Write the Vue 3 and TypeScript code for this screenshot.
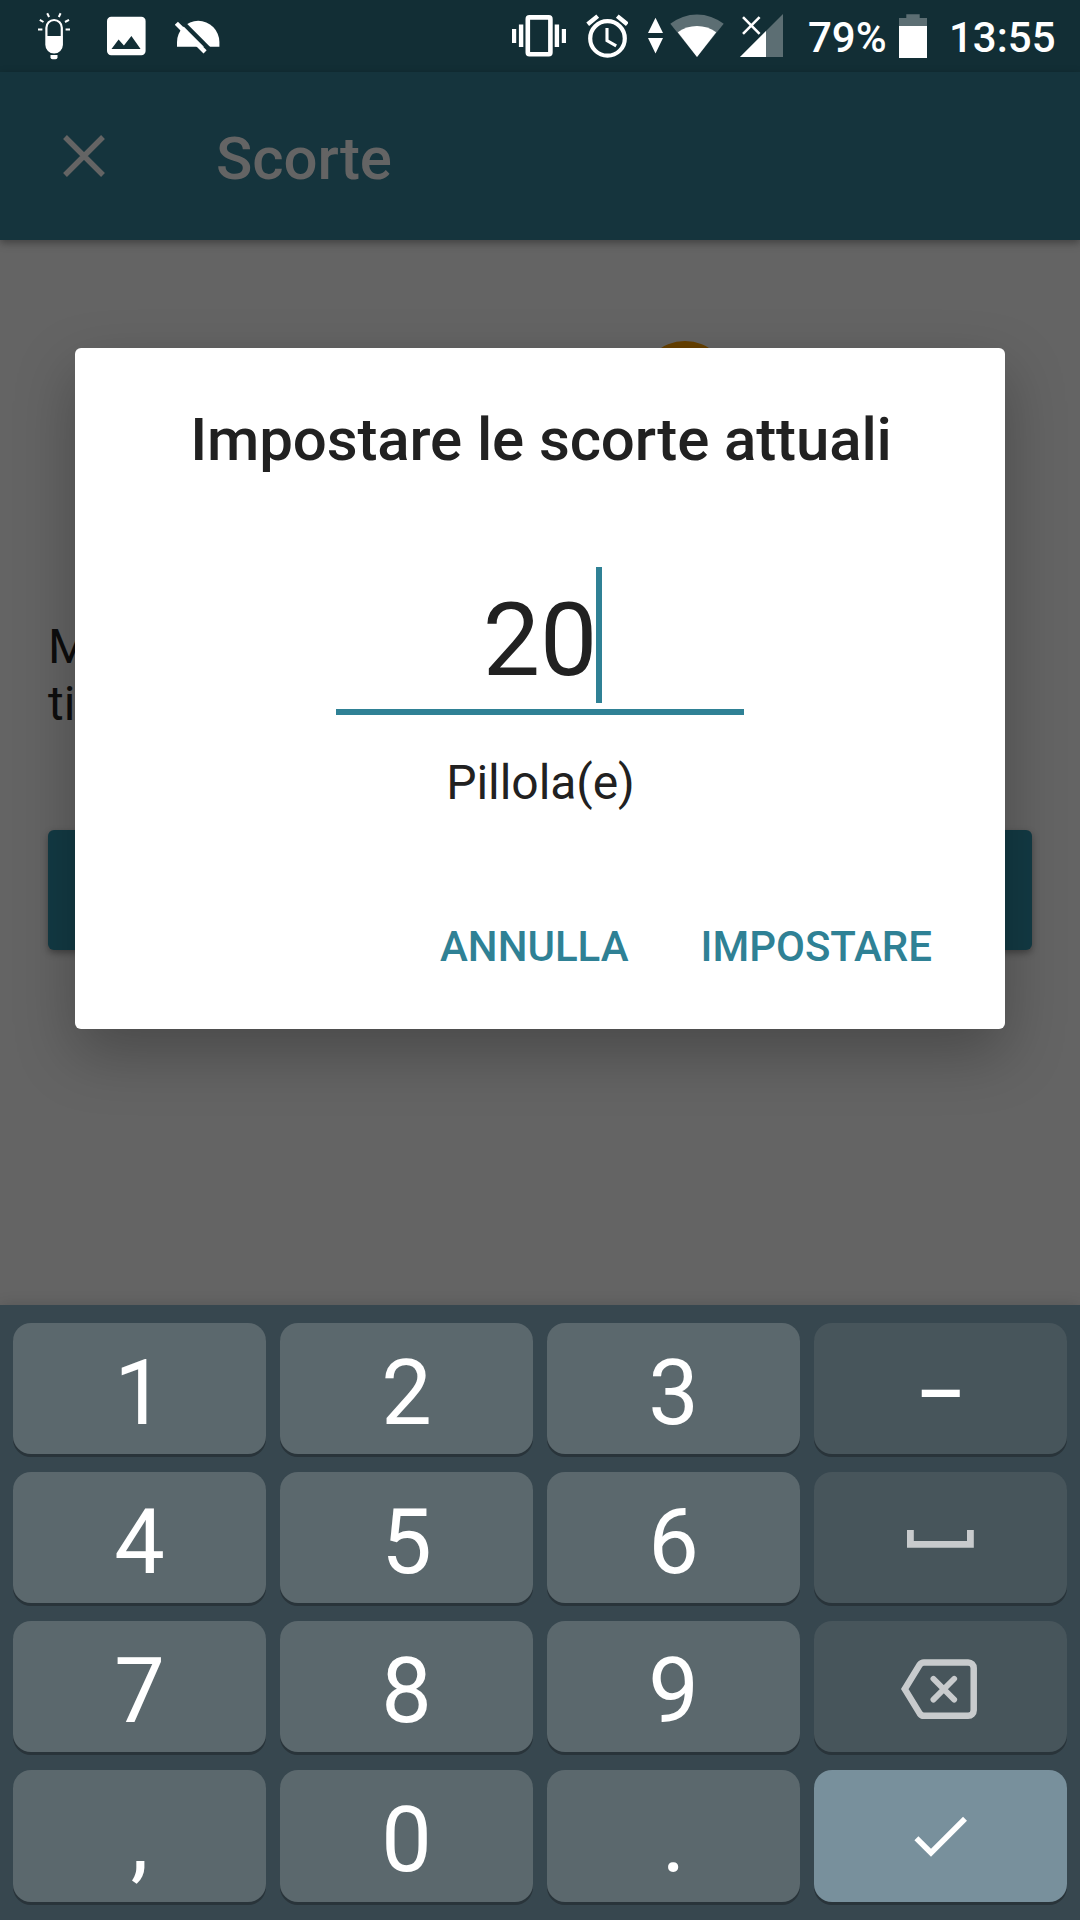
<script setup lang="ts">
import { ref } from 'vue'

interface Key {
  id: string
  label?: string
  kind: 'digit' | 'side' | 'enter'
}

const amount = ref('20')

const keys: Key[] = [
  { id: '1', label: '1', kind: 'digit' },
  { id: '2', label: '2', kind: 'digit' },
  { id: '3', label: '3', kind: 'digit' },
  { id: 'minus', label: '–', kind: 'side' },
  { id: '4', label: '4', kind: 'digit' },
  { id: '5', label: '5', kind: 'digit' },
  { id: '6', label: '6', kind: 'digit' },
  { id: 'space', kind: 'side' },
  { id: '7', label: '7', kind: 'digit' },
  { id: '8', label: '8', kind: 'digit' },
  { id: '9', label: '9', kind: 'digit' },
  { id: 'backspace', kind: 'side' },
  { id: 'comma', label: ',', kind: 'digit' },
  { id: '0', label: '0', kind: 'digit' },
  { id: 'period', label: '.', kind: 'digit' },
  { id: 'done', kind: 'enter' },
]
</script>

<template>
  <div class="screen">
    <header class="status">
      <div class="status-group notifications">
        <svg width="36" height="72" viewBox="36 0 36 72">
          <rect x="46.4" y="20" width="15.4" height="32.4" rx="7.7" fill="none" stroke="#fff" stroke-width="2.2" />
          <path d="M46 36h16.4v8.5a8.2 8.2 0 0 1-16.4 0z" fill="#fff" />
          <path d="M50.5 55h7v2.2a2 2 0 0 1-2 2h-3a2 2 0 0 1-2-2z" fill="#fff" />
          <path d="M38 29.6h4.4M65.6 29.6H70M39.8 19.8l3.7 2.2M65 22l4-2.2M47.2 13.2l1.9 3.8M60.6 13.2L58.8 17" stroke="#fff" stroke-width="2" />
        </svg>
        <svg class="picture" width="39" height="72" viewBox="107 0 39 72">
          <rect x="107" y="16.7" width="38.6" height="38.6" rx="4.2" fill="#fff" />
          <path d="M111.5 49l7.1-9.6 5.3 6.2 7.5-9.6 9.2 13z" fill="#122e35" />
        </svg>
        <svg class="dome" width="46" height="72" viewBox="175 0 46 72">
          <path d="M177 46.8V42a21.2 21.2 0 0 1 42.4 0v4.8z" fill="#fff" />
          <path d="M179 18.8L210.4 50.2" stroke="#122e35" stroke-width="4.4" />
          <path d="M176.4 23.2L205.1 51.9" stroke="#fff" stroke-width="4.4" />
        </svg>
      </div>
      <div class="status-group system">
        <svg width="54" height="72" viewBox="512 0 54 72">
          <rect x="527.8" y="17.4" width="22.6" height="36.8" rx="1.6" fill="none" stroke="#fff" stroke-width="4.6" />
          <path d="M518.9 24.5h4.4v22.6h-4.4zM512 29h4.2v14H512zM554.7 24.5h4.4v22.6h-4.4zM561.8 29h4.2v14h-4.2z" fill="#fff" />
        </svg>
        <svg class="alarm" width="42" height="72" viewBox="586 0 42 72">
          <circle cx="607.5" cy="38.4" r="17.3" fill="none" stroke="#fff" stroke-width="4.2" />
          <path d="M607 28v12.6l9.2 5.3" fill="none" stroke="#fff" stroke-width="3.1" />
          <path d="M587.7 24.3l10-8.2M617.3 16.1l10 8.2" stroke="#fff" stroke-width="4.4" />
        </svg>
        <svg class="arrows" width="15" height="72" viewBox="648 0 15 72">
          <path d="M655.5 17.7L663 33h-15zM648 38h15l-7.5 15.4z" fill="#fff" />
        </svg>
        <svg class="wifi" width="54" height="72" viewBox="669.5 0 54 72">
          <path d="M696.5 57L669.8 23.8a43 43 0 0 1 53.4 0z" fill="#5c6e73" />
          <path d="M696.5 57L677.3 32.3a32 32 0 0 1 38.4 0z" fill="#fff" />
        </svg>
        <svg class="signal" width="43" height="72" viewBox="740 0 43 72">
          <path d="M740 57h43V14z" fill="#5c6e73" />
          <path d="M740 57h26V31z" fill="#fff" />
          <path d="M743 17.2l16.6 16.6M759.6 17.2L743 33.8" stroke="#fff" stroke-width="2.6" />
        </svg>
        <span class="percent">79%</span>
        <svg class="battery" width="28" height="72" viewBox="899 0 28 72">
          <path d="M899 18h7.3v-3.8h13.4V18h7.3v8.5h-28z" fill="#5c6e73" />
          <path d="M899 26h28v32h-28z" fill="#fff" />
        </svg>
        <span class="clock">13:55</span>
      </div>
    </header>

    <div class="appbar">
      <svg width="42" height="42" viewBox="0 0 42 42">
        <path d="M2 2l38 38M40 2L2 40" stroke="#646464" stroke-width="5.4" />
      </svg>
      <h1>Scorte</h1>
    </div>

    <main class="content">
      <span class="knob"></span>
      <p class="hint">M<br />ti</p>
      <div class="primary"></div>

      <section class="dialog">
        <h2>Impostare le scorte attuali</h2>
        <div class="field">
          <span class="value">{{ amount }}</span>
          <span class="caret"></span>
        </div>
        <p class="unit">Pillola(e)</p>
        <div class="actions">
          <span>ANNULLA</span>
          <span>IMPOSTARE</span>
        </div>
      </section>
    </main>

    <div class="keyboard">
      <div v-for="key in keys" :key="key.id" class="key" :class="key.kind">
        <span v-if="key.label">{{ key.label }}</span>
        <svg v-else-if="key.id === 'space'" width="253" height="131" viewBox="814 1472 253 131">
          <path d="M910.4 1530v14.4h60V1530" fill="none" stroke="#c8cbcd" stroke-width="6.8" />
        </svg>
        <svg v-else-if="key.id === 'backspace'" width="253" height="131" viewBox="814 1621 253 131">
          <path d="M924 1662.4h44.2a5.5 5.5 0 0 1 5.5 5.5v42.4a5.5 5.5 0 0 1-5.5 5.5H924a5 5 0 0 1-4.2-2.2L904.8 1689.1l15-24.5a5 5 0 0 1 4.2-2.2z" fill="none" stroke="#c8cbcd" stroke-width="6.5" />
          <path d="M933.4 1678.8l20.8 20.8M954.2 1678.8l-20.8 20.8" stroke="#c8cbcd" stroke-width="5.8" stroke-linecap="round" />
        </svg>
        <svg v-else width="253" height="132" viewBox="814 1770 253 132">
          <path d="M916.4 1838.2l14.6 14.6 34-34" fill="none" stroke="#fff" stroke-width="5.6" />
        </svg>
      </div>
    </div>
  </div>
</template>

<style>
body {
  margin: 0;
}
</style>

<style scoped>
.screen {
  width: 1080px;
  height: 1920px;
  display: flex;
  flex-direction: column;
  overflow: hidden;
  background: #646464;
  font-family: Roboto, 'Liberation Sans', sans-serif;
}

h1,
h2,
p {
  margin: 0;
}

svg {
  display: block;
  flex: none;
}

.status {
  flex: none;
  height: 72px;
  display: flex;
  justify-content: space-between;
  background: #122e35;
  color: #fff;
  font-size: 42px;
  font-weight: 500;
  line-height: 76px;
}

.status-group {
  display: flex;
}

.notifications {
  padding-left: 36px;
}

.picture {
  margin-left: 35px;
}

.dome {
  margin-left: 29px;
}

.system {
  width: 568px;
}

.alarm {
  margin-left: 20px;
}

.arrows {
  margin-left: 20px;
}

.wifi {
  margin-left: 6.5px;
}

.signal {
  margin-left: 16.5px;
}

.percent {
  width: 91px;
  margin-left: 25px;
  white-space: nowrap;
}

.clock {
  margin-left: 22px;
}

.appbar {
  flex: none;
  height: 168px;
  display: flex;
  align-items: center;
  padding-left: 63px;
  background: #15343d;
  color: #646464;
  position: relative;
  z-index: 1;
  box-shadow: 0 3px 8px rgba(0, 0, 0, 0.35);
}

.appbar h1 {
  margin: 5px 0 0 111px;
  font-size: 60px;
  font-weight: 500;
  line-height: 70px;
  letter-spacing: -0.1px;
}

.content {
  flex: 1;
  position: relative;
  display: flex;
  flex-direction: column;
  padding: 378px 48px 0;
}

.knob {
  position: absolute;
  left: 641px;
  top: 101px;
  width: 88px;
  height: 88px;
  border-radius: 50%;
  background: #664000;
}

.hint {
  color: #0d0d0d;
  font-size: 48px;
  line-height: 57px;
}

.primary {
  height: 120px;
  margin-top: 98px;
  border-radius: 6px;
  background: #133a44;
  box-shadow: 0 3px 7px rgba(0, 0, 0, 0.35);
}

.dialog {
  position: absolute;
  left: 75px;
  top: 108px;
  width: 930px;
  height: 681px;
  box-sizing: border-box;
  padding-top: 57px;
  display: flex;
  flex-direction: column;
  align-items: center;
  border-radius: 6px;
  background: #fff;
  color: #212121;
  box-shadow: 0 24px 60px rgba(0, 0, 0, 0.27);
}

.dialog h2 {
  margin-left: 2px;
  font-size: 60px;
  font-weight: 500;
  line-height: 70px;
  letter-spacing: -0.12px;
  white-space: nowrap;
}

.field {
  width: 408px;
  height: 142px;
  margin-top: 92px;
  display: flex;
  justify-content: center;
  border-bottom: 6px solid #2f8195;
}

.value {
  font-size: 102px;
  line-height: 146px;
}

.caret {
  width: 6px;
  height: 136px;
  margin: 0 -5px 0 -1px;
  background: #2f8195;
}

.unit {
  margin: 40px 0 0 1px;
  font-size: 48px;
  line-height: 56px;
  letter-spacing: -0.05px;
}

.actions {
  align-self: flex-end;
  display: flex;
  gap: 72px;
  margin: 111px 73px 0 0;
  color: #2f8195;
  font-size: 42px;
  font-weight: 500;
  line-height: 50px;
}

.keyboard {
  flex: none;
  height: 615px;
  box-sizing: border-box;
  padding: 18px 13px;
  display: grid;
  grid-template-columns: repeat(4, 253px);
  grid-template-rows: 131px 131px 131px 132px;
  gap: 18px 14px;
  background: #37474f;
  position: relative;
  box-shadow: 0 0 14px rgba(0, 0, 0, 0.14);
}

.key {
  display: flex;
  justify-content: center;
  border-radius: 18px;
  background: #5b686d;
  box-shadow: 0 3px 0 #29343a;
  color: #fff;
  font-size: 90px;
  line-height: 142px;
}

.side {
  background: #47555b;
  font-size: 76px;
  font-weight: 500;
}

.enter {
  background: #78909c;
}
</style>
